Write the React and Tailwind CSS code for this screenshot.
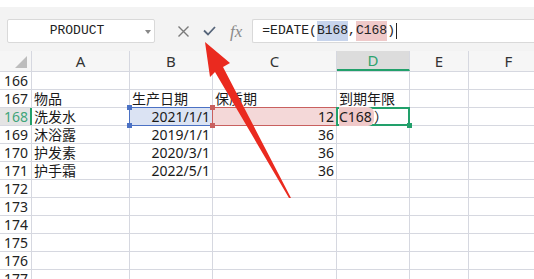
import React from "react";

const cols = [
  { key: "A", w: 98 },
  { key: "B", w: 83 },
  { key: "C", w: 124 },
  { key: "D", w: 73 },
  { key: "E", w: 59 },
  { key: "F", w: 80 },
];

const data = {
  167: { A: ["物品", "l"], B: ["生产日期", "l"], C: ["保质期", "l"], D: ["到期年限", "l"] },
  168: { A: ["洗发水", "l"], B: ["2021/1/1", "r"], C: ["12", "r"] },
  169: { A: ["沐浴露", "l"], B: ["2019/1/1", "r"], C: ["36", "r"] },
  170: { A: ["护发素", "l"], B: ["2020/3/1", "r"], C: ["36", "r"] },
  171: { A: ["护手霜", "l"], B: ["2022/5/1", "r"], C: ["36", "r"] },
};

const rows = [166, 167, 168, 169, 170, 171, 172, 173, 174, 175, 176, 177];

function Handle({ className }) {
  return <div className={"absolute w-[5px] h-[5px] z-20 " + className} />;
}

function Cell({ r, c }) {
  const d = data[r] && data[r][c.key];
  const sel = r === 168;
  return (
    <div
      className="relative shrink-0 h-full border-r border-[#d6d8e0] flex items-end px-[2px]"
      style={{ width: c.w }}
    >
      {sel && c.key === "B" && (
        <>
          <div className="absolute left-[-1px] right-[-1px] top-[-1px] bottom-[-1px] bg-[#dbe3f3] border border-[#4b71c4] z-10" />
          <Handle className="bg-[#4b71c4] left-[-3px] top-[-3px]" />
          <Handle className="bg-[#4b71c4] left-[-3px] bottom-[-3px]" />
        </>
      )}
      {sel && c.key === "C" && (
        <>
          <div className="absolute left-[-1px] right-[-1px] top-[-1px] bottom-[-1px] bg-[#f4d8d8] border border-[#c9605f] z-10" />
          <Handle className="bg-[#c9605f] left-[-3px] top-[-3px]" />
          <Handle className="bg-[#c9605f] left-[-3px] bottom-[-3px]" />
        </>
      )}
      {sel && c.key === "D" && (
        <>
          <div className="absolute left-[-1px] right-[-1px] top-[-1px] bottom-[-1px] border-2 border-[#22a06b] z-10" />
          <Handle className="bg-[#22a06b] right-[-3px] bottom-[-3px]" />
        </>
      )}
      {d && (
        <span
          className={
            "relative z-10 w-full leading-[17px] whitespace-nowrap " +
            (d[1] === "r" ? "text-right" : "text-left")
          }
        >
          {d[0]}
        </span>
      )}
      {sel && c.key === "D" && (
        <span className="relative z-10 w-full leading-[17px] whitespace-nowrap text-left">
          <span className="bg-[#f0c9c9] rounded-r-[6px] pr-[2px]">C168</span>）
        </span>
      )}
    </div>
  );
}

export default function App() {
  return (
    <div
      className="relative w-[534px] h-[279px] overflow-hidden bg-white text-[#1a1a1a]"
      style={{ fontFamily: '"Noto Sans", "Noto Sans CJK SC", sans-serif' }}
    >
      <div className="h-[7px] bg-white" />
      {/* toolbar */}
      <div className="h-[44px] bg-[#f3f3f3] flex items-start pt-[12px]">
        <div className="ml-[7px] w-[148px] h-[24px] bg-white border border-[#d9d9d9] rounded-[2px] flex items-center relative">
          <span
            className="flex-1 text-center text-[13px] text-[#222] pr-[8px]"
            style={{ fontFamily: '"Liberation Mono", monospace' }}
          >
            PRODUCT
          </span>
          <svg className="absolute right-[3px] top-[10px]" width="6" height="4" viewBox="0 0 6 4">
            <path d="M0 0 L6 0 L3 4 Z" fill="#888" />
          </svg>
        </div>
        <div className="flex items-center h-[24px] ml-[22px] gap-[13px]">
          <svg width="13" height="13" viewBox="0 0 13 13">
            <path d="M1.5 1.5 L11.5 11.5 M11.5 1.5 L1.5 11.5" stroke="#7a7a7a" strokeWidth="1.4" fill="none" />
          </svg>
          <svg width="13" height="10" viewBox="0 0 13 10">
            <path d="M1 4.5 L5 8.5 L12 1" stroke="#56657a" strokeWidth="1.8" fill="none" />
          </svg>
          <span
            className="text-[17px] italic text-[#8a8a8a] leading-none ml-[1px]"
            style={{ fontFamily: '"Liberation Serif", serif' }}
          >
            fx
          </span>
        </div>
        <div
          className="ml-[10px] flex-1 h-[24px] bg-white border border-[#d9d9d9] rounded-l-[2px] border-r-0 flex items-center pl-[9px] text-[13px] text-[#222]"
          style={{ fontFamily: '"Liberation Mono", monospace' }}
        >
          <span>=EDATE(</span>
          <span className="bg-[#c7d4ec]">B168</span>
          <span>,</span>
          <span className="bg-[#efc9c9]">C168</span>
          <span>)</span>
          <span className="w-[1px] h-[16px] bg-[#222] ml-[1px]" />
        </div>
      </div>
      {/* column header */}
      <div className="h-[21px] flex bg-[#f6f6f6] border-b border-[#d6d8e0]">
        <div className="w-[32px] shrink-0 h-full border-r border-[#d6d8e0] relative">
          <svg className="absolute right-[4px] bottom-[3px]" width="12" height="12" viewBox="0 0 12 12">
            <path d="M12 0 L12 12 L0 12 Z" fill="#bdbdbd" />
          </svg>
        </div>
        {cols.map((c) => (
          <div
            key={c.key}
            className={
              "shrink-0 h-full flex items-center justify-center text-[15px] border-r border-[#d6d8e0] " +
              (c.key === "D"
                ? "bg-[#dcdcdc] text-[#2da36f] border-b-2 border-b-[#22a06b]"
                : "text-[#333]")
            }
            style={{ width: c.w }}
          >
            {c.key}
          </div>
        ))}
      </div>
      {/* rows */}
      {rows.map((r) => (
        <div key={r} className="h-[18px] flex border-b border-[#d6d8e0] text-[14px]">
          <div
            className={
              "w-[32px] shrink-0 h-full flex items-end pl-[4px] leading-[17px] border-r " +
              (r === 168
                ? "bg-[#e4e4e4] text-[#3fa57a] border-r-2 border-r-[#22a06b]"
                : "border-[#d6d8e0] text-[#222]")
            }
          >
            {r}
          </div>
          {cols.map((c) => (
            <Cell key={c.key} r={r} c={c} />
          ))}
        </div>
      ))}
      {/* red arrow annotation */}
      <svg className="absolute left-0 top-0 z-30 pointer-events-none" width="534" height="279">
        <polygon
          points="205,42 230,63 223,67 291,198 289,198 215,72 210,77"
          fill="#ea2a1f"
        />
      </svg>
    </div>
  );
}
